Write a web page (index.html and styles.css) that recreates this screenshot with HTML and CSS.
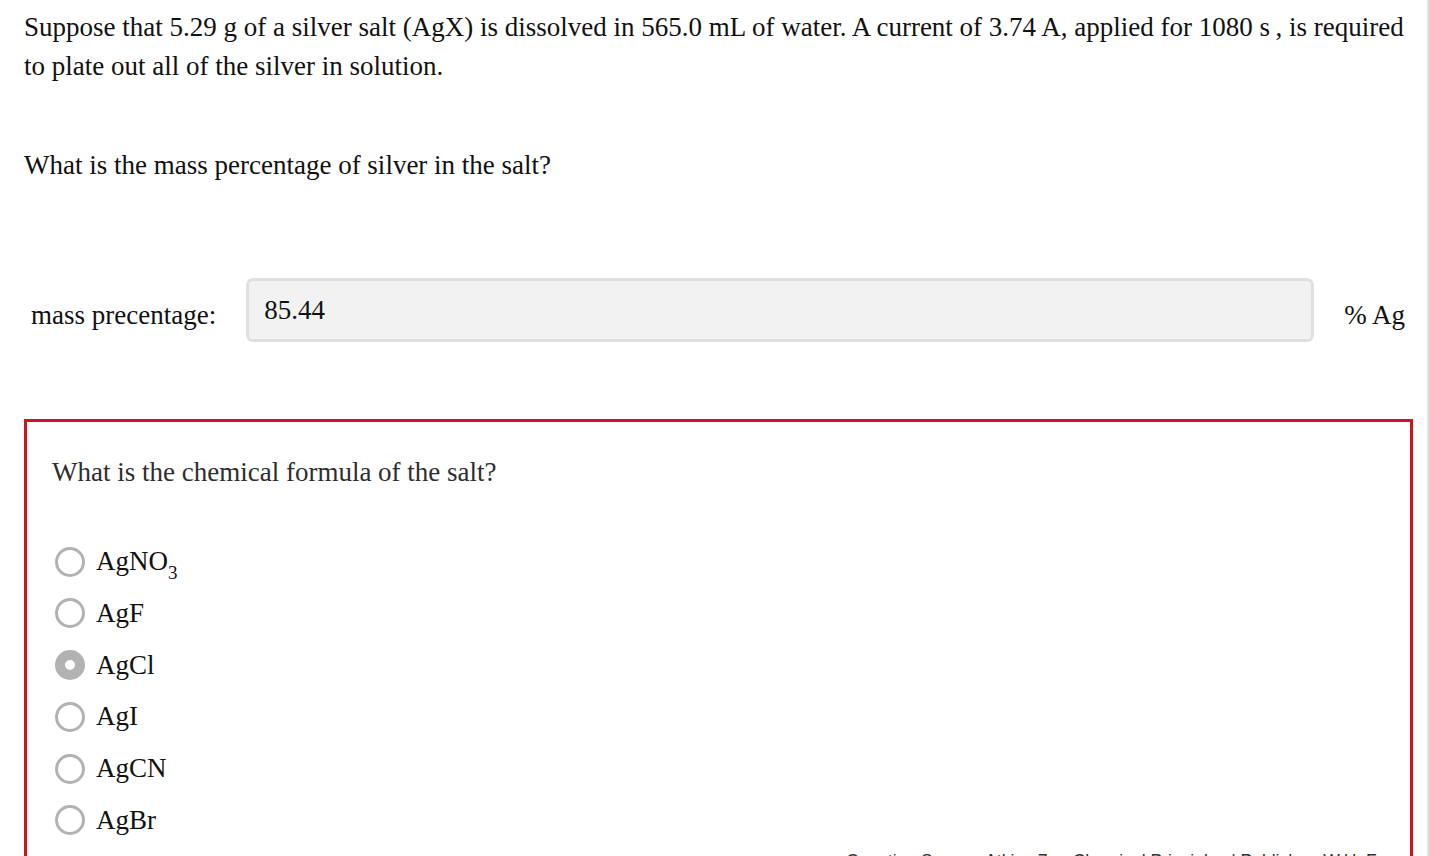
FILE: index.html
```html
<!DOCTYPE html>
<html lang="en">
<head>
<meta charset="utf-8">
<title>Silver salt electrolysis</title>
<link rel="stylesheet" href="styles.css">
</head>
<body>
<div class="page">
  <div class="content">
    <p class="intro">Suppose that 5.29 g of a silver salt (AgX) is dissolved in 565.0 mL of water. A current of 3.74 A, applied for 1080 s&thinsp;, is required to plate out all of the silver in solution.</p>
    <p class="prompt">What is the mass percentage of silver in the salt?</p>
    <div class="answer-row">
      <span class="answer-label">mass precentage:</span>
      <div class="answer-field">85.44</div>
      <span class="answer-unit">% Ag</span>
    </div>
    <div class="mc-box">
      <p class="mc-question">What is the chemical formula of the salt?</p>
      <ul class="options">
        <li class="option"><span class="radio"></span><span class="option-label">AgNO<sub class="sub">3</sub></span></li>
        <li class="option"><span class="radio"></span><span class="option-label">AgF</span></li>
        <li class="option"><span class="radio radio-checked"></span><span class="option-label">AgCl</span></li>
        <li class="option"><span class="radio"></span><span class="option-label">AgI</span></li>
        <li class="option"><span class="radio"></span><span class="option-label">AgCN</span></li>
        <li class="option"><span class="radio"></span><span class="option-label">AgBr</span></li>
      </ul>
      <div class="source">Question Source: Atkins 7e - Chemical Principles | Publisher: W.H. Freeman</div>
    </div>
  </div>
</div>
</body>
</html>
```
FILE: styles.css
```css
html, body {
  margin: 0;
  padding: 0;
  background: #ffffff;
  overflow: hidden;
}

body {
  font-family: "Liberation Serif", "Times New Roman", serif;
  font-size: 27px;
  line-height: 39px;
  color: #111111;
}

.page {
  width: 1427px;
  min-height: 856px;
  border-right: 2px solid #e4e4e4;
}

.content {
  padding: 8px 14px 0 24px;
}

.intro {
  margin: 0;
  line-height: 38.5px;
}

.prompt {
  margin: 61px 0 0 0;
}

.answer-row {
  margin-top: 93px;
  display: flex;
  align-items: center;
  gap: 30px;
  padding: 0 8px 0 7px;
}

.answer-label {
  flex: none;
  padding-top: 10px;
}

.answer-field {
  flex: 1;
  height: 64px;
  box-sizing: border-box;
  border: 3px solid #e0e0e0;
  border-radius: 7px;
  background: #f2f2f2;
  padding: 10px 15px 0 15px;
  color: #111111;
}

.answer-unit {
  flex: none;
  padding-top: 10px;
}

.mc-box {
  margin-top: 77px;
  border: 3px solid #d3121f;
  border-bottom: none;
  padding: 31px 0 0 25px;
  min-height: 500px;
  overflow: hidden;
}

.mc-question {
  margin: 0;
  color: #2e2e2e;
}

.options {
  list-style: none;
  margin: 50px 0 0 0;
  padding: 0 0 0 3px;
  display: flex;
  flex-direction: column;
  gap: 12.8px;
}

.option {
  display: flex;
  align-items: center;
  gap: 11px;
  height: 39px;
}

.radio {
  flex: none;
  width: 30px;
  height: 30px;
  box-sizing: border-box;
  border: 3px solid #b2b2b2;
  border-radius: 50%;
  background: #ffffff;
}

.radio-checked {
  border-width: 10px;
}

.option-label {
  color: #111111;
}

.sub {
  font-size: 19px;
  line-height: 0;
  vertical-align: -9px;
}

.source {
  margin-top: 11px;
  padding-left: 794px;
  white-space: nowrap;
  overflow: hidden;
  font-family: "Liberation Sans", Arial, sans-serif;
  font-size: 17.5px;
  line-height: 20px;
  color: #333333;
}
```
